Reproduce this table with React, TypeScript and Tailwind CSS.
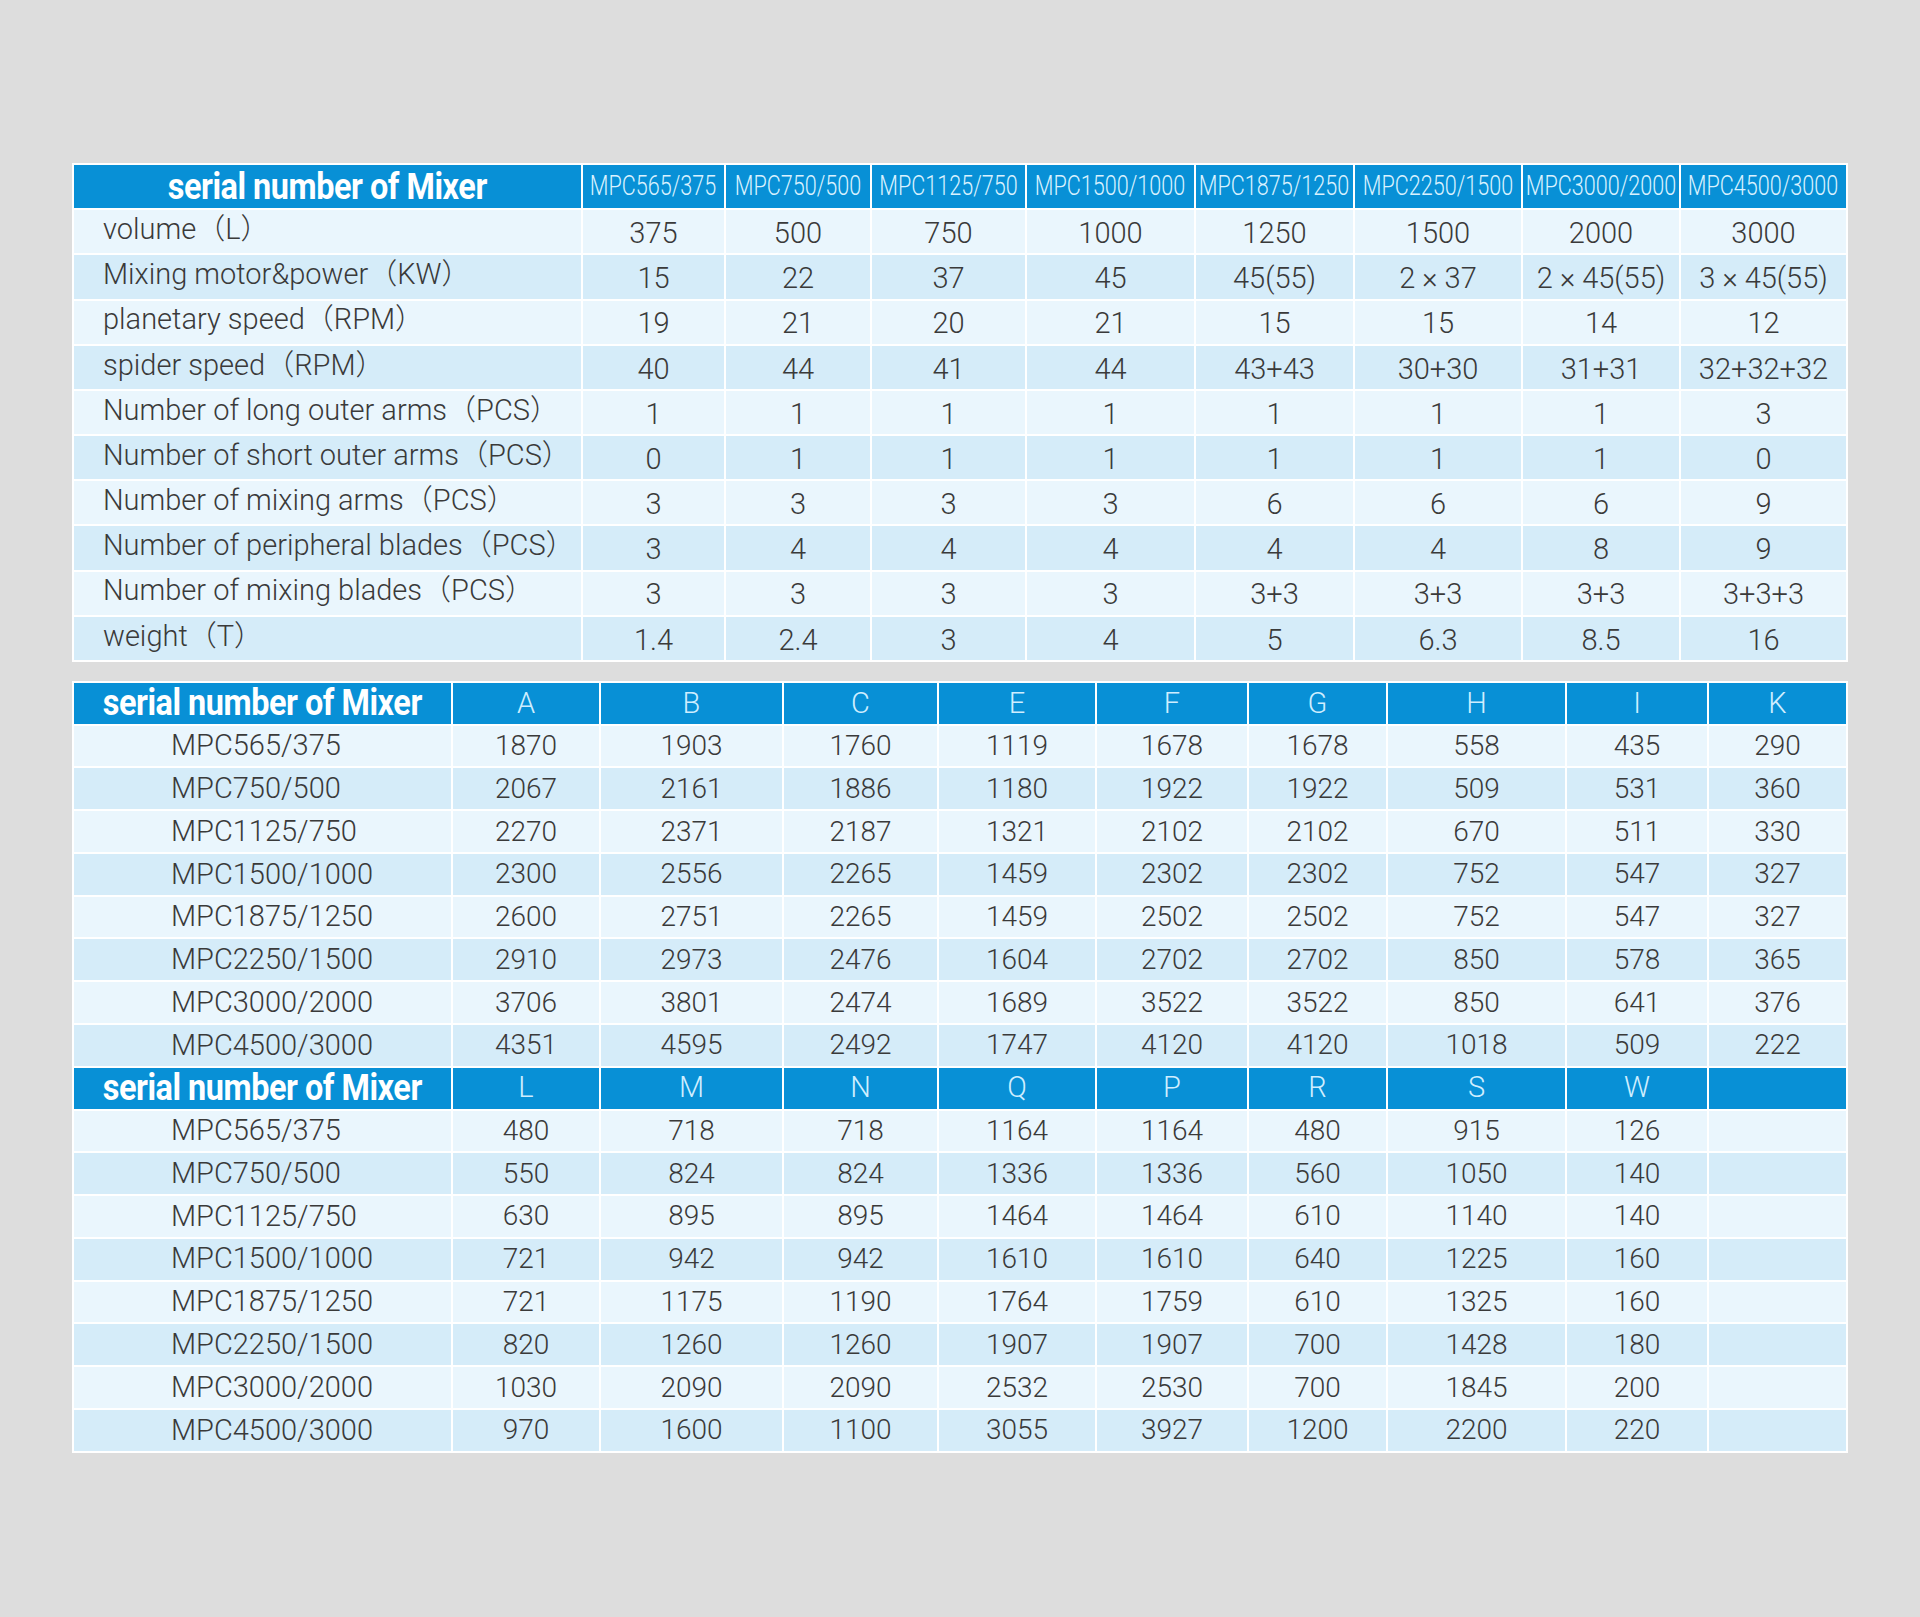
const models = [
  "MPC565/375",
  "MPC750/500",
  "MPC1125/750",
  "MPC1500/1000",
  "MPC1875/1250",
  "MPC2250/1500",
  "MPC3000/2000",
  "MPC4500/3000",
];

const specs: [string, string[]][] = [
  ["volume（L）", ["375", "500", "750", "1000", "1250", "1500", "2000", "3000"]],
  ["Mixing motor&power（KW）", ["15", "22", "37", "45", "45(55)", "2 × 37", "2 × 45(55)", "3 × 45(55)"]],
  ["planetary speed（RPM）", ["19", "21", "20", "21", "15", "15", "14", "12"]],
  ["spider speed（RPM）", ["40", "44", "41", "44", "43+43", "30+30", "31+31", "32+32+32"]],
  ["Number of long outer arms（PCS）", ["1", "1", "1", "1", "1", "1", "1", "3"]],
  ["Number of short outer arms（PCS）", ["0", "1", "1", "1", "1", "1", "1", "0"]],
  ["Number of mixing arms（PCS）", ["3", "3", "3", "3", "6", "6", "6", "9"]],
  ["Number of peripheral blades（PCS）", ["3", "4", "4", "4", "4", "4", "8", "9"]],
  ["Number of mixing blades（PCS）", ["3", "3", "3", "3", "3+3", "3+3", "3+3", "3+3+3"]],
  ["weight（T）", ["1.4", "2.4", "3", "4", "5", "6.3", "8.5", "16"]],
];

const dimsA = ["A", "B", "C", "E", "F", "G", "H", "I", "K"];
const rowsA = [
  ["1870", "1903", "1760", "1119", "1678", "1678", "558", "435", "290"],
  ["2067", "2161", "1886", "1180", "1922", "1922", "509", "531", "360"],
  ["2270", "2371", "2187", "1321", "2102", "2102", "670", "511", "330"],
  ["2300", "2556", "2265", "1459", "2302", "2302", "752", "547", "327"],
  ["2600", "2751", "2265", "1459", "2502", "2502", "752", "547", "327"],
  ["2910", "2973", "2476", "1604", "2702", "2702", "850", "578", "365"],
  ["3706", "3801", "2474", "1689", "3522", "3522", "850", "641", "376"],
  ["4351", "4595", "2492", "1747", "4120", "4120", "1018", "509", "222"],
];

const dimsB = ["L", "M", "N", "Q", "P", "R", "S", "W", ""];
const rowsB = [
  ["480", "718", "718", "1164", "1164", "480", "915", "126", ""],
  ["550", "824", "824", "1336", "1336", "560", "1050", "140", ""],
  ["630", "895", "895", "1464", "1464", "610", "1140", "140", ""],
  ["721", "942", "942", "1610", "1610", "640", "1225", "160", ""],
  ["721", "1175", "1190", "1764", "1759", "610", "1325", "160", ""],
  ["820", "1260", "1260", "1907", "1907", "700", "1428", "180", ""],
  ["1030", "2090", "2090", "2532", "2530", "700", "1845", "200", ""],
  ["970", "1600", "1100", "3055", "3927", "1200", "2200", "220", ""],
];

const light = "[font-family:Roboto,'Noto_Sans_CJK_SC',sans-serif] font-light";

function rowBg(i: number) {
  return i % 2 === 0 ? "bg-[#eaf6fd]" : "bg-[#d5ecf9]";
}

function MixerHead() {
  return (
    <div className="flex items-center justify-center overflow-hidden whitespace-nowrap bg-[#0890d6]">
      <span className="inline-block scale-x-[0.9] text-[36px] font-bold tracking-[-0.5px] text-white [font-family:Roboto,sans-serif]">
        serial number of Mixer
      </span>
    </div>
  );
}

function SpecTable() {
  return (
    <div className="grid w-[1776px] grid-cols-[507px_141px_144px_153px_167px_157px_166px_156px_165px] auto-rows-[43.18px] gap-[2px] bg-white p-[2px]">
      <MixerHead />
      {models.map((m) => (
        <div
          key={m}
          className="flex items-center justify-center overflow-hidden whitespace-nowrap bg-[#0890d6]"
        >
          <span className={`inline-block scale-x-[0.8] text-[27px] text-[#d9f2ff] ${light}`}>
            {m}
          </span>
        </div>
      ))}
      {specs.map(([label, vals], i) => (
        <div key={label} className="contents">
          <div
            className={`flex items-center whitespace-nowrap pb-[4px] pl-[29px] text-[29px] text-[#3a3a3a] ${light} ${rowBg(i)}`}
          >
            {label}
          </div>
          {vals.map((v, j) => (
            <div
              key={j}
              className={`flex items-center justify-center whitespace-nowrap pt-[4px] text-[29px] text-[#3a3a3a] ${light} ${rowBg(i)}`}
            >
              {v}
            </div>
          ))}
        </div>
      ))}
    </div>
  );
}

function DimBlock({ dims, rows }: { dims: string[]; rows: string[][] }) {
  return (
    <>
      <MixerHead />
      {dims.map((d, j) => (
        <div
          key={j}
          className={`flex items-center justify-center bg-[#0890d6] text-[29px] text-[#cfeeff] ${light}`}
        >
          {d}
        </div>
      ))}
      {rows.map((vals, i) => (
        <div key={i} className="contents">
          <div
            className={`flex items-center pl-[97px] text-[29px] text-[#3a3a3a] ${light} ${rowBg(i)}`}
          >
            {models[i]}
          </div>
          {vals.map((v, j) => (
            <div
              key={j}
              className={`flex items-center justify-center text-[28px] text-[#3a3a3a] ${light} ${rowBg(i)}`}
            >
              {v}
            </div>
          ))}
        </div>
      ))}
    </>
  );
}

function DimTable() {
  return (
    <div className="mt-[19px] grid w-[1776px] grid-cols-[377px_146px_181px_153px_156px_150px_137px_177px_140px_137px] auto-rows-[40.78px] gap-[2px] bg-white p-[2px]">
      <DimBlock dims={dimsA} rows={rowsA} />
      <DimBlock dims={dimsB} rows={rowsB} />
    </div>
  );
}

export default function App() {
  return (
    <main className="min-h-[1617px] w-[1920px] bg-[#dddddd] pl-[72px] pt-[163px]">
      <SpecTable />
      <DimTable />
    </main>
  );
}
